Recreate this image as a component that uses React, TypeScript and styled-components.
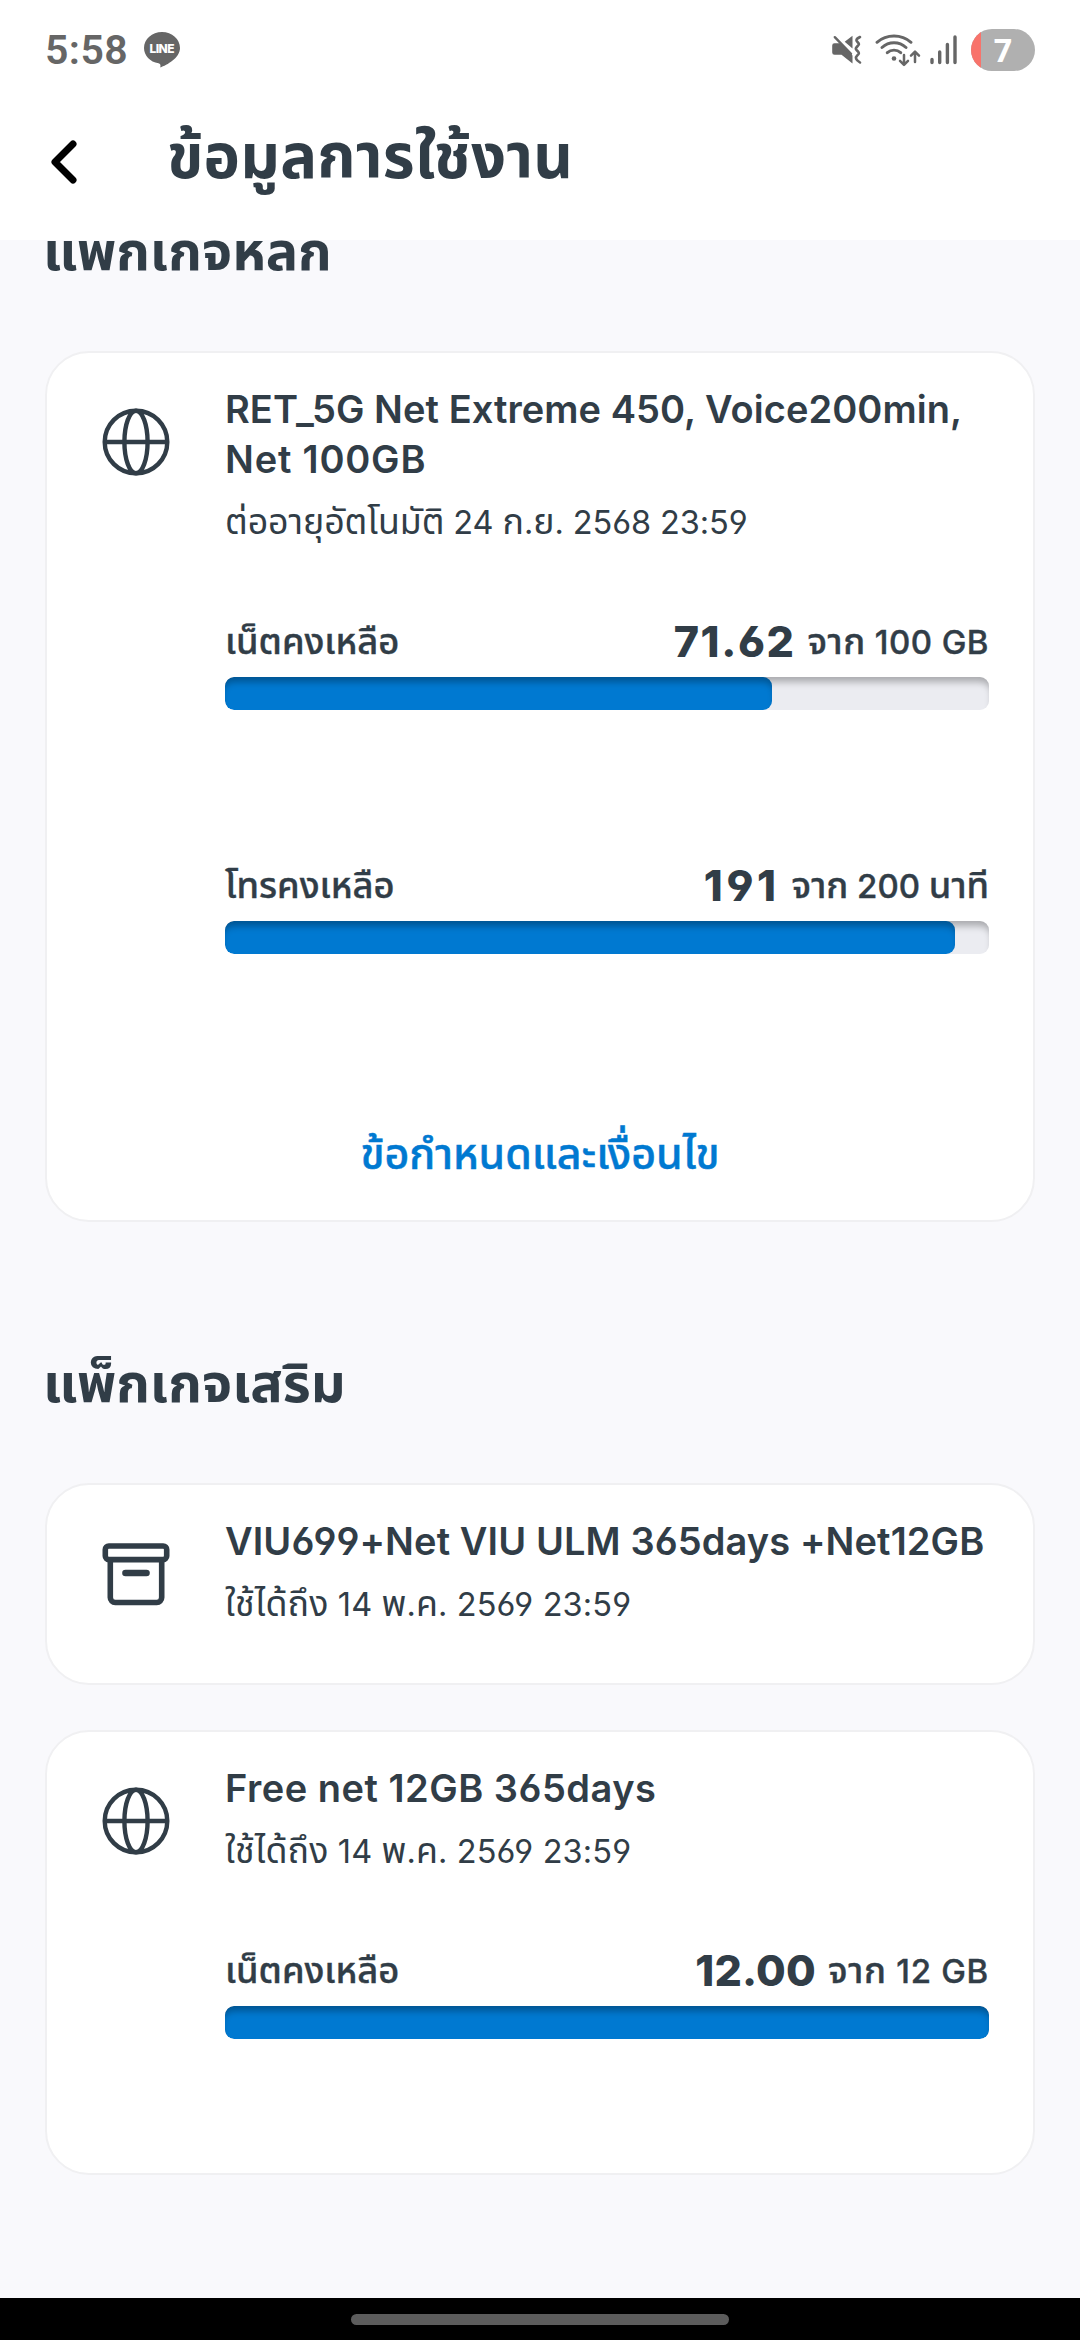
import React from "react";
import styled, { createGlobalStyle } from "styled-components";

const ink = "#313d47";
const blue = "#0079d1";
const statusGray = "#666666";

const GlobalStyle = createGlobalStyle`
  * { box-sizing: border-box; }
  body { margin: 0; background: #fff; }
  svg { flex: none; display: block; }
`;

const Screen = styled.div`
  width: 1080px;
  height: 2340px;
  display: flex;
  flex-direction: column;
  overflow: hidden;
  background: #f9f9fc;
  color: ${ink};
  font-family: Inter, "Noto Sans Thai", "Noto Sans", sans-serif;
  font-feature-settings: "cv03", "cv04";
`;

const StatusBar = styled.div`
  height: 100px;
  padding: 0 45px;
  display: flex;
  align-items: center;
  flex: none;
  background: #fff;
  color: ${statusGray};
`;

const Clock = styled.span`
  width: 99px;
  font: 600 41px/100px Roboto, sans-serif;
  letter-spacing: 0.4px;
`;

const StatusIcons = styled.div`
  margin-left: auto;
  display: flex;
  align-items: center;
  gap: 13px;
`;

const Connectivity = styled.div`
  display: flex;
  align-items: center;
  gap: 9px;
`;

const Header = styled.header`
  height: 140px;
  padding: 0 50px 17px;
  display: flex;
  align-items: center;
  flex: none;
  background: #fff;
`;

const BackButton = styled.button`
  width: 118px;
  height: 60px;
  padding: 0;
  border: 0;
  background: none;
  display: flex;
  align-items: center;
`;

const Title = styled.h1`
  margin: 0 0 12px -1px;
  font-size: 61.5px;
  line-height: 80px;
  font-weight: 700;
  letter-spacing: 0.2px;
  white-space: nowrap;
`;

const Content = styled.main`
  height: 2058px;
  flex: none;
  padding: 0 45px;
  overflow: hidden;
  display: flex;
  flex-direction: column;
`;

const SectionTitle = styled.h2<{ $top: number }>`
  margin: ${(p) => p.$top}px 0 0 -2px;
  height: 80px;
  flex: none;
  font-size: 54px;
  line-height: 77px;
  font-weight: 700;
  white-space: nowrap;
`;

const Card = styled.section<{ $top: number; $height: number }>`
  margin-top: ${(p) => p.$top}px;
  height: ${(p) => p.$height}px;
  flex: none;
  border: 2px solid #f0f0f2;
  border-radius: 44px;
  background: #fff;
  padding: 31px 44px 0 55px;
  display: grid;
  grid-template-columns: 123px 1fr;
  grid-template-rows: auto 1fr;
`;

const IconCell = styled.div`
  padding-top: 24px;
`;

const Details = styled.div`
  display: flex;
  flex-direction: column;
`;

const PackageName = styled.h3`
  margin: 0;
  font-size: 38px;
  line-height: 50px;
  font-weight: 600;
  white-space: nowrap;
`;

const NameLine = styled.span<{ $tracking: number }>`
  display: block;
  letter-spacing: ${(p) => p.$tracking}px;
`;

const Validity = styled.p<{ $tracking?: number }>`
  margin: 10px 0 0;
  height: 54px;
  font-size: 32.5px;
  line-height: 54px;
  letter-spacing: ${(p) => p.$tracking ?? 0}px;
  white-space: nowrap;
`;

const Thai = styled.span`
  font-size: 1.1em;
`;

const Usage = styled.div<{ $top: number }>`
  margin-top: ${(p) => p.$top}px;
`;

const UsageRow = styled.div`
  height: 56px;
  display: flex;
  justify-content: space-between;
  white-space: nowrap;
`;

const UsageLabel = styled.span<{ $tracking?: number }>`
  font-size: 33px;
  line-height: 58px;
  font-weight: 500;
  letter-spacing: ${(p) => p.$tracking ?? 0}px;
  -webkit-text-stroke: 0.4px currentColor;
`;

const Amount = styled.span`
  display: flex;
`;

const Remaining = styled.strong<{ $tracking: number }>`
  font-size: 43px;
  line-height: 58px;
  font-weight: 800;
  letter-spacing: ${(p) => p.$tracking}px;
  margin-right: 12px;
`;

const Track = styled.div`
  margin-top: 9px;
  height: 33px;
  border-radius: 9px;
  background: #ebecf1;
  box-shadow: inset 0 8px 7px -3px rgba(0, 0, 0, 0.28);
  overflow: hidden;
`;

const Fill = styled.div`
  height: 100%;
  border-radius: 9px;
  background: ${blue};
  box-shadow: inset 0 8px 7px -3px rgba(0, 0, 0, 0.3);
`;

const TermsLink = styled.a`
  grid-column: 1 / -1;
  justify-self: center;
  margin: 170px 0 0 -11px;
  color: ${blue};
  font-size: 42.800px;
  line-height: 60px;
  font-weight: 500;
  -webkit-text-stroke: 0.5px currentColor;
`;

const NavBar = styled.footer`
  height: 42px;
  flex: none;
  background: #000;
  display: flex;
  justify-content: center;
  padding-top: 16px;
`;

const HomePill = styled.div`
  width: 378px;
  height: 11px;
  border-radius: 6px;
  background: #5c5c5c;
`;

const LineBadge = () => (
  <svg width="36" height="36" viewBox="0 0 36 36">
    <path d="M18 0C8 0 0 7 0 16c0 7.500 6 14 14.500 15.300 1.800.4 2.300 1.200 1.800 4.200C23 33 36 26 36 16 36 7 28 0 18 0Z" fill={statusGray} />
    <text x="18" y="20.600" textAnchor="middle" fontFamily="Inter, sans-serif" fontWeight="800" fontSize="12" textLength="25" fill="#fff">LINE</text>
  </svg>
);

const MuteIcon = () => (
  <svg width="30" height="30" viewBox="0 0 30 30">
    <path d="M2.500 8.300H8.500L20.500 20.500V28.500L9.500 19.700H2.500A2.300 2.300 0 0 1 .2 17.400V10.600A2.300 2.300 0 0 1 2.500 8.300ZM20.500.8V13.500L12.700 6.800Z" fill={statusGray} />
    <path d="M2.800 2.200 19 18.800" stroke={statusGray} strokeWidth="2.400" strokeLinecap="round" />
    <path d="m28 2c-4 2-4.500 3-2.500 5s2 2-.3 4.500-1.500 2.700.3 4.500 2 2.500-.3 4.500-1.500 4.500 2.800 7" fill="none" stroke={statusGray} strokeWidth="2.600" strokeLinecap="round" strokeLinejoin="round" />
  </svg>
);

const WifiIcon = () => (
  <svg width="46" height="34" viewBox="0 0 46 34">
    <g fill="none" stroke={statusGray} strokeWidth="2.900" strokeLinecap="round" strokeLinejoin="round">
      <path d="M2 9.300a26 26 0 0 1 34 0M7 14.500a17.500 17.500 0 0 1 24 0M12.300 19.700a10 10 0 0 1 13.400 0" />
      <path d="M29 22v9.500M25 27.800l4 4 4-4M40 29V18.800M36 22.600l4-4 4 4" strokeWidth="2.500" />
    </g>
    <circle cx="19" cy="25.500" r="2.300" fill={statusGray} />
  </svg>
);

const SignalIcon = () => (
  <svg width="28" height="30" viewBox="0 0 28 30">
    <path d="M2 24.500v3M9.700 17v10.500M17.400 9.500v18M25 2v25.500" stroke={statusGray} strokeWidth="3.400" strokeLinecap="round" />
  </svg>
);

const BatteryIcon = () => (
  <svg width="64" height="42" viewBox="0 0 64 42">
    <defs>
      <clipPath id="battery-shape">
        <rect width="64" height="42" rx="21" />
      </clipPath>
    </defs>
    <g clipPath="url(#battery-shape)">
      <rect width="64" height="42" fill="#b0b0b0" />
      <rect width="10" height="42" fill="#f8736b" />
    </g>
    <text x="32" y="33" textAnchor="middle" fontFamily="'Open Sans', sans-serif" fontWeight="700" fontSize="32" fill="#fff">7</text>
  </svg>
);

const GlobeIcon = () => (
  <svg width="68" height="68" viewBox="0 0 68 68" fill="none" stroke={ink} strokeWidth="4.400">
    <circle cx="34" cy="34" r="31.300" />
    <ellipse cx="34" cy="34" rx="11.600" ry="31.300" />
    <path d="M3 34h62" />
  </svg>
);

const BoxIcon = () => (
  <svg width="68" height="68" viewBox="0 0 68 68" fill="none" stroke={ink} strokeWidth="5.600">
    <rect x="3.300" y="6" width="61.400" height="13.600" rx="3.500" />
    <path d="M8.300 19.500v38a5 5 0 0 0 5 5h41.400a5 5 0 0 0 5-5v-38" />
    <path d="M23.500 33h21" strokeWidth="6.600" strokeLinecap="round" />
  </svg>
);

/* Thai runs are set slightly larger so they balance with the Latin digits. */
const Mixed = ({ text }: { text: string }) => (
  <>
    {text.split(/([\u0E00-\u0E7F]+)/).map((run, i) => (i % 2 ? <Thai key={i}>{run}</Thai> : run))}
  </>
);

type UsageData = {
  label: string;
  left: string;
  total: string;
  percent: number;
  top: number;
  leftTracking: number;
  totalTracking: number;
};

const UsageMeter = ({ label, left, total, percent, top, leftTracking, totalTracking }: UsageData) => (
  <Usage $top={top}>
    <UsageRow>
      <UsageLabel><Mixed text={label} /></UsageLabel>
      <Amount>
        <Remaining $tracking={leftTracking}>{left}</Remaining>
        <UsageLabel $tracking={totalTracking}><Mixed text={total} /></UsageLabel>
      </Amount>
    </UsageRow>
    <Track>
      <Fill style={{ width: `${percent}%` }} />
    </Track>
  </Usage>
);

export default function App() {
  return (
    <Screen>
      <GlobalStyle />
      <StatusBar>
        <Clock>5:58</Clock>
        <LineBadge />
        <StatusIcons>
          <MuteIcon />
          <Connectivity>
            <WifiIcon />
            <SignalIcon />
          </Connectivity>
          <BatteryIcon />
        </StatusIcons>
      </StatusBar>
      <Header>
        <BackButton aria-label="ย้อนกลับ">
          <svg width="28" height="46" viewBox="0 0 28 46">
            <path d="M23 5 5 23l18 18" fill="none" stroke="#000" strokeWidth="7" strokeLinecap="round" strokeLinejoin="round" />
          </svg>
        </BackButton>
        <Title>ข้อมูลการใช้งาน</Title>
      </Header>
      <Content>
        <SectionTitle $top={-28}>แพ็กเกจหลัก</SectionTitle>
        <Card $top={59} $height={871}>
          <IconCell><GlobeIcon /></IconCell>
          <Details>
            <PackageName>
              <NameLine $tracking={0.05}>RET_5G Net Extreme 450, Voice200min,</NameLine>
              <NameLine $tracking={0.8}>Net 100GB</NameLine>
            </PackageName>
            <Validity $tracking={-0.08}><Mixed text="ต่ออายุอัตโนมัติ 24 ก.ย. 2568 23:59" /></Validity>
            <UsageMeter top={64} label="เน็ตคงเหลือ" left="71.62" total="จาก 100 GB" percent={71.62} leftTracking={1.6} totalTracking={0.45} />
            <UsageMeter top={146} label="โทรคงเหลือ" left="191" total="จาก 200 นาที" percent={95.5} leftTracking={3.6} totalTracking={0} />
          </Details>
          <TermsLink>ข้อกำหนดและเงื่อนไข</TermsLink>
        </Card>
        <SectionTitle $top={122}>แพ็กเกจเสริม</SectionTitle>
        <Card $top={59} $height={202}>
          <IconCell><BoxIcon /></IconCell>
          <Details>
            <PackageName>
              <NameLine $tracking={0.1}>VIU699+Net VIU ULM 365days +Net12GB</NameLine>
            </PackageName>
            <Validity $tracking={0.12}><Mixed text="ใช้ได้ถึง 14 พ.ค. 2569 23:59" /></Validity>
          </Details>
        </Card>
        <Card $top={45} $height={445}>
          <IconCell><GlobeIcon /></IconCell>
          <Details>
            <PackageName>
              <NameLine $tracking={0.5}>Free net 12GB 365days</NameLine>
            </PackageName>
            <Validity $tracking={0.12}><Mixed text="ใช้ได้ถึง 14 พ.ค. 2569 23:59" /></Validity>
            <UsageMeter top={64} label="เน็ตคงเหลือ" left="12.00" total="จาก 12 GB" percent={100} leftTracking={0.2} totalTracking={0.7} />
          </Details>
        </Card>
      </Content>
      <NavBar><HomePill /></NavBar>
    </Screen>
  );
}
